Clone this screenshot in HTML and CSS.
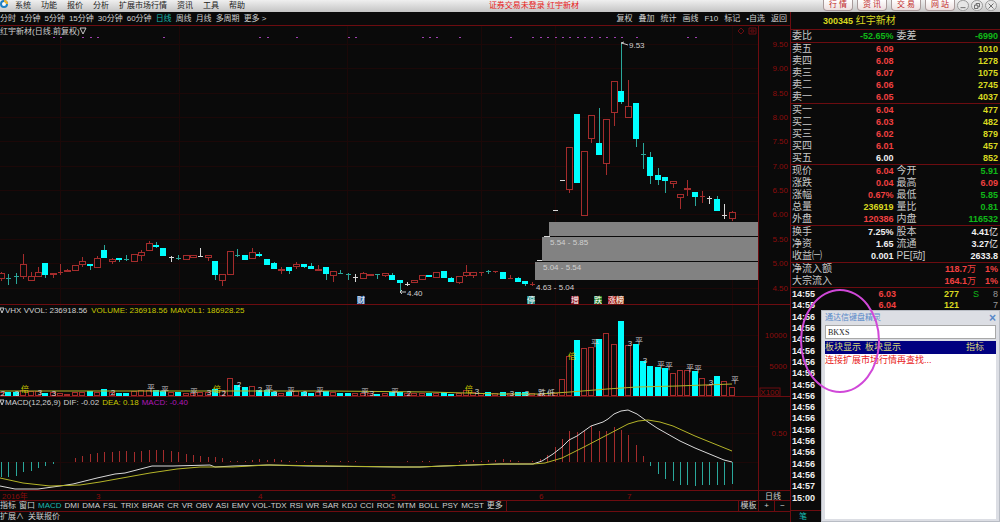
FILE: index.html
```html
<!DOCTYPE html>
<html lang="zh-CN">
	<head>
		<meta charset="UTF-8" />
		<meta name="viewport" content="width=device-width, initial-scale=1.0" />
		<title>红宇新材 300345</title>
		<link rel="stylesheet" href="styles.css">
	</head>
	<body>
		<header class="titlebar">
			<svg class="logo" viewBox="0 0 10 10">
				<circle cx="4" cy="4" r="3" fill="#fff" stroke="#1d7fc4" stroke-width="2" />
				<path d="M4 1a3 3 0 0 1 3 3" fill="none" stroke="#f0b429" stroke-width="2" />
			</svg>
			<nav class="menu">
				<a href="#">系统</a>
				<a href="#">功能</a>
				<a href="#">报价</a>
				<a href="#">分析</a>
				<a href="#">扩展市场行情</a>
				<a href="#">资讯</a>
				<a href="#">工具</a>
				<a href="#">帮助</a>
			</nav>
			<div class="caption">证券交易未登录 红宇新材</div>
			<div class="modes">
				<button type="button">行 情</button>
				<button type="button">资 讯</button>
				<button type="button">交 易</button>
				<button type="button">网 站</button>
			</div>
			<div class="winbtns">
				<button type="button" aria-label="最小化"><svg viewBox="0 0 12 12"><path d="M3 8h6" /></svg></button>
				<button type="button" aria-label="还原"><svg viewBox="0 0 12 12"><path d="M5 5V3h4v4H7M3 5h4v4H3z" /></svg></button>
				<button type="button" aria-label="关闭"><svg viewBox="0 0 12 12"><path d="M3 3l6 6M9 3l-6 6" /></svg></button>
			</div>
		</header>

		<div class="workspace">
			<main class="charts">
				<div class="toolbar">
					<nav class="periods">
						<a href="#">分时</a>
						<a href="#">1分钟</a>
						<a href="#">5分钟</a>
						<a href="#">15分钟</a>
						<a href="#">30分钟</a>
						<a href="#">60分钟</a>
						<a href="#" class="active">日线</a>
						<a href="#">周线</a>
						<a href="#">月线</a>
						<a href="#">多周期</a>
						<a href="#">更多 &gt;</a>
					</nav>
					<nav class="tools">
						<a href="#">复权</a>
						<a href="#">叠加</a>
						<a href="#">统计</a>
						<a href="#">画线</a>
						<a href="#">F10</a>
						<a href="#">标记</a>
						<a href="#">•自选</a>
						<a href="#">返回</a>
					</nav>
				</div>

				<svg class="chart" viewBox="0 25 790 280">
					<g id="kgrid"></g>
					<g id="kbars"></g>
					<g class="zones">
						<rect x="549" y="222" width="209" height="14" />
						<rect x="542" y="237" width="216" height="24" />
						<rect x="535" y="262" width="223" height="18" />
						<path d="M544 236.500h5M537 260.500h5" />
					</g>
					<g class="white">
						<text x="550" y="245">5.54 - 5.85</text>
						<text x="543" y="270">5.04 - 5.54</text>
						<text x="536" y="290">4.63 - 5.04</text>
						<text x="629" y="48">9.53</text>
						<text x="407" y="296">4.40</text>
					</g>
					<path class="arrow" d="M628 45l-3-1-4-1M621 43l3-1M406 292h-6M402 290l-2 2 2 2" />
					<text class="white" x="0" y="34">红宇新材(日线.前复权)</text>
					<path class="arrow" d="M80 28h6l-3 6z" />
					<path class="frame" d="M741 28l3 3-3 3-3-3zM749 28h7v6h-7zM751 30h3v2h-3z" />
					<g id="badges"></g>
					<path class="frame" d="M0 25.500h790M758.500 25v280M0 304.500h790" />
				</svg>

				<svg class="chart" viewBox="0 305 790 92">
					<g id="vgrid"></g>
					<g id="vbars"></g>
					<polyline class="dea" points="0,391 60,391 120,391 180,391 240,391 330,391 430,392 500,394 540,394 570,392 607,389 637,387 677,386 732,384" />
					<g id="marks"></g>
					<path class="arrow" d="M0 308h4l-2 5z" />
					<text class="white" x="5" y="313">VHX VVOL: 236918.56<tspan class="yellow" dx="4">VOLUME: 236918.56</tspan><tspan class="yellow" dx="3">MAVOL1: 186928.25</tspan></text>
					<path class="frame" d="M758.500 305v92M0 396.500h790" />
					<rect class="frame" x="760" y="388" width="20" height="8" />
					<text class="axis" x="779" y="395" text-anchor="end">X100</text>
				</svg>

				<svg class="chart" viewBox="0 397 790 103">
					<g id="mgrid"></g>
					<g id="mbars"></g>
					<polyline class="dif" points="0,486 15,489 38,489 60,486 73,484 97,478 115,474 125,473 152,466 173,466 210,465 215,467 233,466 270,465 307,466 400,467 420,467 443,466 500,464 533,464 542,461 553,454 562,447 569,440 577,436 591,426 603,422 608,419 614,414 621,411 628,410 637,414 648,422 657,428 680,441 695,448 724,460 732,462" />
					<polyline class="dea" points="0,478 23,483 50,486 80,485 100,482 150,473 177,469 200,467 233,467 267,465 333,466 400,467 420,467 443,466 500,464 533,464 545,463 562,458 584,447 607,435 628,424 638,421 648,420 660,422 673,426 695,436 732,451" />
					<path class="arrow" d="M0 400h4l-2 5z" />
					<text class="white" x="5" y="405">MACD(12,26,9)<tspan dx="3">DIF: -0.02</tspan><tspan class="yellow" dx="3">DEA: 0.18</tspan><tspan class="purple" dx="3">MACD: -0.40</tspan></text>
					<g class="axis">
						<text x="2" y="499">2016年</text>
						<text x="96" y="499">3</text>
						<text x="258" y="499">4</text>
						<text x="391" y="499">5</text>
						<text x="539" y="499">6</text>
						<text x="627" y="499">7</text>
						<text x="787" y="436" text-anchor="end">0.50</text>
					</g>
					<text class="white" x="765" y="499">日线</text>
					<path class="frame" d="M758.500 397v103M0 490.500h790" />
				</svg>

				<div class="indicators">
					<nav>
						<a href="#">指标</a>
						<a href="#">窗口</a>
						<a href="#" class="active">MACD</a>
						<a href="#">DMI</a>
						<a href="#">DMA</a>
						<a href="#">FSL</a>
						<a href="#">TRIX</a>
						<a href="#">BRAR</a>
						<a href="#">CR</a>
						<a href="#">VR</a>
						<a href="#">OBV</a>
						<a href="#">ASI</a>
						<a href="#">EMV</a>
						<a href="#">VOL-TDX</a>
						<a href="#">RSI</a>
						<a href="#">WR</a>
						<a href="#">SAR</a>
						<a href="#">KDJ</a>
						<a href="#">CCI</a>
						<a href="#">ROC</a>
						<a href="#">MTM</a>
						<a href="#">BOLL</a>
						<a href="#">PSY</a>
						<a href="#">MCST</a>
						<a href="#">更多</a>
					</nav>
					<div class="zoom">
						<button type="button">模板</button>
						<button type="button">+</button>
						<button type="button">−</button>
					</div>
				</div>
				<div class="footer">
					<a href="#">扩展∧</a>
					<a href="#">关联报价</a>
				</div>
			</main>

			<aside class="quote">
				<h1><b>300345</b> 红宇新材</h1>
				<table>
					<tr><th>委比</th><td class="g">-52.65%</td><th>委差</th><td class="g">-6990</td></tr>
				</table>
				<table>
					<tr><th>卖五</th><td class="r">6.09</td><th></th><td class="y">1010</td></tr>
					<tr><th>卖四</th><td class="r">6.08</td><th></th><td class="y">1278</td></tr>
					<tr><th>卖三</th><td class="r">6.07</td><th></th><td class="y">1075</td></tr>
					<tr><th>卖二</th><td class="r">6.06</td><th></th><td class="y">2745</td></tr>
					<tr><th>卖一</th><td class="r">6.05</td><th></th><td class="y">4037</td></tr>
				</table>
				<table>
					<tr><th>买一</th><td class="r">6.04</td><th></th><td class="y">477</td></tr>
					<tr><th>买二</th><td class="r">6.03</td><th></th><td class="y">482</td></tr>
					<tr><th>买三</th><td class="r">6.02</td><th></th><td class="y">879</td></tr>
					<tr><th>买四</th><td class="r">6.01</td><th></th><td class="y">457</td></tr>
					<tr><th>买五</th><td>6.00</td><th></th><td class="y">852</td></tr>
				</table>
				<table>
					<tr><th>现价</th><td class="r">6.04</td><th>今开</th><td class="g">5.91</td></tr>
					<tr><th>涨跌</th><td class="r">0.04</td><th>最高</th><td class="r">6.09</td></tr>
					<tr><th>涨幅</th><td class="r">0.67%</td><th>最低</th><td class="g">5.85</td></tr>
					<tr><th>总量</th><td class="y">236919</td><th>量比</th><td class="g">0.81</td></tr>
					<tr><th>外盘</th><td class="r">120386</td><th>内盘</th><td class="g">116532</td></tr>
				</table>
				<table>
					<tr><th>换手</th><td>7.25%</td><th>股本</th><td>4.41<i>亿</i></td></tr>
					<tr><th>净资</th><td>1.65</td><th>流通</th><td>3.27<i>亿</i></td></tr>
					<tr><th>收益㈠</th><td>0.001</td><th>PE[动]</th><td>2633.8</td></tr>
				</table>
				<table class="flow">
					<tr><th>净流入额</th><td class="r">118.7<i>万</i></td><td class="r">1%</td></tr>
					<tr><th>大宗流入</th><td class="r">164.1<i>万</i></td><td class="r">1%</td></tr>
				</table>
				<div class="ticks" id="ticks"></div>
				<div class="ticktab"><a href="#">笔</a></div>

				<section class="wizard">
					<header>
						<span>通达信键盘精灵</span>
						<button type="button" aria-label="关闭">×</button>
					</header>
					<input type="text" aria-label="键盘输入" value="BKXS">
					<div class="results">
						<div class="row selected"><span>板块显示</span><span>板块显示</span><span class="kind">指标</span></div>
						<div class="row notice">连接扩展市场行情再查找...</div>
					</div>
				</section>
				<div class="circle"></div>
			</aside>
		</div>

		<script>
			const STEP = 7.38;
			const RED = "#a42c2c", CYAN = "#00ffff", TEAL = "#2aa79b", WHITE = "#d8d8d8";

			// kind, body top, body bottom, high, low (u = up, d = down, c/r/w = doji)
			const candles = [
				["u",273,279,272,281],["c",278,278,274,285],["c",276,276,273,284],["u",264,277,254,279],["u",276,281,272,281],
				["u",272,277,267,277],["d",263,275,263,278],["u",273,275,273,278],["r",272,272,264,275],["u",270,272,269,272],
				["u",265,271,265,271],["u",261,265,257,267],["d",264,266,264,270],["u",258,268,256,268],["d",250,258,245,258],
				["u",259,262,258,264],["d",258,260,258,262],["c",259,259,255,261],["u",254,262,254,262],["u",252,256,250,261],
				["u",243,251,241,251],["d",245,247,242,248],["d",248,256,248,256],["w",257,257,256,262],["c",258,258,255,260],
				["u",255,260,255,260],["u",255,258,255,258],["w",256,256,248,256],["u",255,258,255,261],["d",261,275,261,280],
				["u",274,281,274,286],["u",251,275,251,275],["c",255,255,249,257],["d",255,260,255,260],["u",252,259,248,259],
				["d",254,256,252,257],["d",259,265,259,265],["d",263,269,262,269],["u",269,271,267,274],["d",267,271,267,274],
				["u",264,267,262,269],["d",264,267,264,268],["d",266,269,263,269],["u",269,271,265,271],["d",267,274,267,280],
				["u",271,276,271,282],["c",273,273,270,274],["c",274,274,273,280],["w",277,277,274,282],["u",273,279,272,279],
				["u",274,276,274,276],["c",274,274,274,279],["u",273,276,273,277],["d",275,280,273,280],["d",280,283,280,292],
				["w",284,284,282,286],["u",280,283,280,283],["u",275,280,275,280],["d",275,277,275,277],["u",272,278,272,278],
				["d",271,278,271,278],["d",278,282,277,282],["u",276,283,276,284],["u",272,276,265,277],["u",272,276,272,278],
				["r",272,272,272,276],["c",271,271,270,274],["r",271,271,271,273],["d",272,279,272,279],["r",278,278,275,279],
				["d",278,282,277,282],["d",281,284,281,286],["r",284,284,282,286],["w",260,260,260,260],["w",236,236,236,236],
				["w",210,210,210,210],["w",180,180,180,180],["u",147,190,147,193],["d",114,183,114,183],["u",151,216,151,216],
				["u",115,139,115,143],["d",143,155,108,155],["u",119,164,119,175],["u",81,113,81,126],["d",91,102,43,104],
				["u",106,118,80,118],["d",103,139,103,147],["c",154,154,143,169],["d",157,176,152,184],["d",175,180,168,185],
				["d",177,181,177,193],["u",181,184,181,188],["u",194,198,194,209],["u",188,190,180,196],["d",192,197,192,206],
				["r",196,196,191,203],["w",198,198,196,204],["d",199,211,196,211],["w",215,215,204,219],["u",212,219,211,221]
			];
			const volumes = [
				4,4,4,6,5,5,3,4,3,2,4,4,5,4,7,4,3,3,5,6,6,6,5,4,4,3,3,4,4,7,6,18,11,9,10,6,6,4,3,4,5,4,3,4,5,4,3,3,3,3,
				3,2,3,4,4,3,3,3,3,3,4,2,3,6,4,3,4,3,4,3,4,4,3,2,1,3,17,40,56,48,49,57,63,52,75,51,52,35,30,29,28,23,26,26,25,18,11,20,15,9
			];
			const macd = [
				-15,-15,-14,-10,-9,-6,-4,-2,0,0,4,6,8,9,10,10,11,11,10,11,12,12,12,11,10,8,7,6,5,5,4,1,1,1,2,3,2,3,2,1,1,1,1,0,1,0,1,1,1,0,
				0,0,0,0,0,1,0,1,1,0,0,0,1,2,2,1,2,2,3,2,1,0,1,3,7,15,23,31,30,31,36,31,31,35,32,27,17,6,-4,-12,-17,-19,-23,-23,-24,-23,-23,-23,-23,-22
			];
			const marks = [
				["倍",25,392],["倍",217,392],["倍",572,359],["倍",469,392],
				["平",151,391],["平",165,393],["平",194,395],["平",269,392],["平",291,394],["平",320,394],["平",365,395],["平",395,395],
				["2",3,396],["3",17,396],["3",40,395],["3",54,396],["2",113,395],["3",209,395],["2",224,396],["2",239,387],["2",260,392],
				["3",275,396],["2",305,396],["3",372,396],["2",409,396],["3",477,394],["3",512,396],["3",527,396],["跌",542,396],["低",551,396],
				["平",595,346],["3",630,346],["平",639,344],["3",645,363],["平",661,368],["平",669,369],["平",690,371],["平",698,372],["3",711,385],["平",735,383]
			];
			const badges = [["财",361,"#2c5f9e"],["停",531,"#2a8f8a"],["增",575,"#8c1c28"],["跌",598,"#1c7a24"],["涨",612,"#a01818"],["榜",620,"#a8502c"]];
			const dots = [7,8,11,12,13,22,35,36,40,47,48,57,58,59,62,69,72,73,74,75,76,77,78,79,80,81,82,83,84,86,93,94];

			function xAt(i) {
				return Math.round(1 + i * STEP);
			}
			function rect(x, y, w, h, fill) {
				return `<rect x="${x}" y="${y}" width="${w}" height="${h}" fill="${fill}"/>`;
			}
			function box(x, y, w, h) {
				return `<rect x="${x + 0.5}" y="${y + 0.5}" width="${w - 1}" height="${Math.max(h - 1, 1)}" fill="#0a0a0a" stroke="${RED}"/>`;
			}
			function fill(id, html) {
				document.getElementById(id).innerHTML = html;
			}
			function grid(rows, top, bottom) {
				let out = "";
				rows.forEach((y) => (out += rect(0, y, 758, 1, "#1c0808")));
				[60, 179, 347, 481, 555, 732].forEach((x) => (out += rect(x, top, 1, bottom - top, "#1c0808")));
				return out;
			}

			let priceGrid = [];
			let labels = "";
			for (let k = 0; k <= 10; k++) {
				const y = Math.round(44 + k * 24.35);
				priceGrid.push(y);
				labels += `<text class="axis" x="788" y="${y + 3}" text-anchor="end">${(9.5 - k * 0.5).toFixed(2)}</text>`;
			}
			fill("kgrid", grid(priceGrid, 26, 304) + labels + dots.map((i) => rect(xAt(i), 37, 2, 1, "#a040b0")).join(""));

			fill("kbars", candles.map(([kind, top, bottom, high, low], i) => {
				const x = xAt(i);
				const color = { u: RED, d: TEAL, c: TEAL, r: RED, w: WHITE }[kind];
				let out = rect(x, high, 1, low - high, color);
				if (kind === "u") out += box(x - 3, top, 7, bottom - top);
				else if (kind === "d") out += rect(x - 3, top, 6, bottom - top, CYAN);
				else out += rect(x - 2, top, 5, 1, color);
				return out;
			}).join(""));

			fill("badges", badges.map(([t, x, c]) => rect(x - 4, 296, 8, 8, c) + `<text class="badge" x="${x}" y="303">${t}</text>`).join(""));

			fill("vgrid", grid([335, 366], 305, 396) +
				'<text class="axis" x="787" y="338" text-anchor="end">10000</text><text class="axis" x="787" y="369" text-anchor="end">5000</text>');
			fill("vbars", volumes.map((v, i) => {
				const x = xAt(i) - 3;
				return candles[i][0] === "d" || candles[i][0] === "c" ? rect(x, 396 - v, 6, v, CYAN) : box(x, 396 - v, 6, v);
			}).join(""));
			fill("marks", marks.map(([t, x, y]) => `<text class="mark ${t === "倍" ? "yellow" : "white"}" x="${x}" y="${y}">${t}</text>`).join(""));

			fill("mgrid", grid([433, 462], 397, 490));
			fill("mbars", macd.map((v, i) => rect(xAt(i), v > 0 ? 462 - v : 462, 1, Math.abs(v), v > 0 ? RED : TEAL)).join(""));

			const times = ["14:55", "14:55", ...Array(15).fill("14:56"), "14:57", "15:00"];
			const deals = [["6.03", "277", "S", "8"], ["6.04", "121", "", "7"]];
			fill("ticks", times.map((t, i) => {
				const [price, vol, side, n] = deals[i] || ["", "", "", ""];
				return `<div><span>${t}</span><span class="r">${price}</span><span class="y">${vol}</span><span class="g side">${side}</span><span class="n">${n}</span></div>`;
			}).join(""));
		</script>
	</body>
</html>
```
FILE: styles.css
```css
* {
	box-sizing: border-box;
}
body {
	display: flex;
	flex-direction: column;
	min-height: 100vh;
	margin: 0;
	background-color: #0a0a0a;
	color: #d0d0d0;
	font-family: "Liberation Sans", "Noto Sans CJK SC", sans-serif;
	font-size: 8px;
	line-height: 11px;
}
a {
	color: inherit;
	text-decoration: none;
	white-space: nowrap;
}
button {
	padding: 0;
	border: 0;
	background: none;
	color: inherit;
	font: inherit;
	cursor: pointer;
}

/* title bar */
.titlebar {
	display: flex;
	height: 12px;
	background: linear-gradient(#efefef, #c4c4c4);
	color: #222;
	overflow: hidden;
}
.logo {
	width: 10px;
	height: 10px;
	margin-right: 5px;
}
.menu {
	display: flex;
	gap: 10px;
}
.caption {
	flex: 1;
	color: #e81818;
	text-align: center;
	white-space: nowrap;
}
.modes {
	display: flex;
	gap: 4px;
	margin-right: 2px;
}
.modes button {
	width: 30px;
	height: 11px;
	border: 1px solid #a89a9a;
	border-top: 0;
	border-radius: 0 0 4px 4px;
	background: linear-gradient(#fff, #ecdede);
	color: #c02828;
	line-height: 10px;
}
.winbtns {
	display: flex;
	gap: 2px;
	margin-right: 3px;
}
.winbtns button {
	width: 12px;
	height: 11px;
	border: 1px solid #999;
	border-radius: 6px;
	background-color: #e6e6e6;
}
.winbtns svg {
	display: block;
	fill: none;
	stroke: #555;
}

.workspace {
	display: flex;
	flex: 1;
}
.charts {
	flex: 1;
	min-width: 0;
}
.toolbar {
	display: flex;
	justify-content: space-between;
	height: 13px;
	padding-right: 3px;
	line-height: 13px;
}
.periods {
	display: flex;
	gap: 4px;
}
.tools {
	display: flex;
	gap: 6px;
}
.active {
	color: #18b8b0;
}

/* charts */
.chart {
	display: block;
	width: 100%;
	overflow: hidden;
}
.white {
	fill: #d0d0d0;
}
.yellow {
	fill: #c8c800;
}
.purple {
	fill: #b018b8;
}
.axis {
	fill: #8a0c0c;
}
.frame {
	fill: none;
	stroke: #6c0c10;
}
.arrow {
	fill: none;
	stroke: #c8c8c8;
}
.zones rect {
	fill: #828282;
}
.zones path {
	stroke: #d8d8d8;
}
.dif,
.dea {
	fill: none;
	stroke: #d8d8d8;
}
.dea {
	stroke: #b4b428;
}
.badge,
.mark {
	text-anchor: middle;
}
.badge {
	fill: #fff;
}

/* indicator tabs */
.indicators {
	display: flex;
	justify-content: space-between;
	height: 12px;
	border-top: 1px solid #6c0c10;
	border-bottom: 1px solid #6c0c10;
	line-height: 10px;
}
.indicators nav {
	display: flex;
	gap: 3px;
	padding-right: 3px;
	border-right: 1px solid #6c0c10;
}
.zoom {
	display: flex;
}
.zoom button {
	width: 16px;
	border-left: 1px solid #6c0c10;
	line-height: 10px;
}
.zoom button:first-child {
	width: 20px;
}
.footer {
	display: flex;
	gap: 4px;
	line-height: 10px;
}

/* quote panel */
.quote {
	display: flex;
	flex-direction: column;
	position: relative;
	width: 210px;
	border-left: 1px solid #6c0c10;
}
.quote h1 {
	height: 17px;
	margin: 0;
	padding-left: 32px;
	color: #d8d820;
	font-size: 10px;
	font-weight: normal;
	line-height: 18px;
}
.quote b {
	font-size: 9px;
}
.quote table {
	width: 100%;
	border-top: 1px solid #6c0c10;
	border-spacing: 0;
	table-layout: fixed;
}
.quote th,
.quote td {
	height: 12px;
	padding: 0 2px 0 1px;
	white-space: nowrap;
	line-height: 12px;
}
.quote th {
	width: 40px;
	color: #c8c8c8;
	font-size: 10px;
	font-weight: normal;
	text-align: left;
}
.quote td {
	color: #f0f0f0;
	font-size: 9px;
	font-weight: bold;
	text-align: right;
}
.quote i {
	font-style: normal;
	font-weight: normal;
}
.quote .flow th {
	width: 110px;
}
.quote .flow td:last-child {
	width: 22px;
}
.quote .r {
	color: #f04040;
}
.quote .g {
	color: #10b818;
}
.quote .y {
	color: #d8d820;
}
.ticks {
	display: grid;
	grid-auto-rows: 1fr;
	flex: 1;
	padding: 1px 2px 6px 1px;
	border-top: 1px solid #6c0c10;
	font-size: 9px;
	font-weight: bold;
}
.ticks div {
	display: grid;
	grid-template-columns: 28px 76px 63px 20px 1fr;
	color: #f0f0f0;
	text-align: right;
}
.ticks span:first-child {
	text-align: left;
}
.ticks .side,
.ticks .n {
	font-weight: normal;
}
.ticks .n {
	color: #999;
}
.ticktab {
	height: 12px;
	padding-left: 8px;
	border-top: 1px solid #6c0c10;
	color: #18b8b0;
}

/* keyboard wizard popup */
.wizard {
	display: flex;
	flex-direction: column;
	position: absolute;
	top: 298px;
	right: 0;
	bottom: 0;
	width: 179px;
	padding: 0 3px 2px;
	border: 1px solid #b8bcc4;
	background-color: #dcdee4;
}
.wizard header {
	display: flex;
	justify-content: space-between;
	height: 14px;
	color: #5888c8;
	line-height: 13px;
}
.wizard header button {
	font-size: 12px;
	font-weight: bold;
}
.wizard input {
	width: 100%;
	height: 14px;
	margin-bottom: 2px;
	padding: 0 2px;
	border: 1px solid #a8a8a8;
	background-color: #fff;
	color: #222;
	font-family: "Liberation Serif", serif;
	font-size: 8px;
}
.results {
	flex: 1;
	background-color: #fff;
	font-size: 9px;
}
.row {
	display: flex;
	gap: 4px;
	height: 13px;
	line-height: 13px;
}
.selected {
	background-color: #000080;
	color: #d8d878;
}
.kind {
	margin-left: auto;
	padding-right: 12px;
}
.notice {
	color: #e82020;
}
.circle {
	position: absolute;
	top: 277px;
	left: 9px;
	width: 80px;
	height: 104px;
	border: 2px solid #d048d8;
	border-radius: 50%;
}
```
